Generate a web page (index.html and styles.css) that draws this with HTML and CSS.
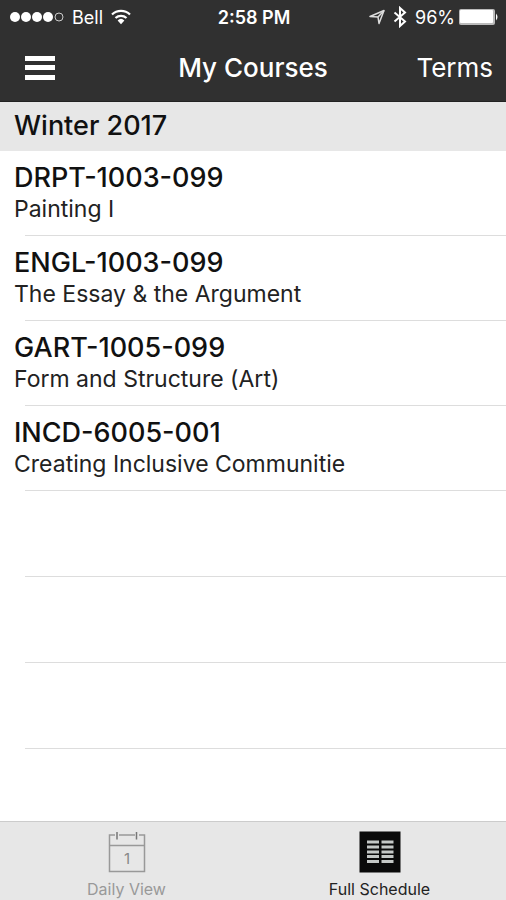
FILE: index.html
```html
<!DOCTYPE html>
<html lang="en">
<head>
    <meta charset="UTF-8">
    <meta name="viewport" content="width=device-width, initial-scale=1.0">
    <title>My Courses</title>
    <link rel="stylesheet" href="styles.css">
</head>
<body>
    <header class="header">
        <div class="status-bar">
            <div class="status-left">
                <svg class="signal" width="54" height="12" viewBox="0 0 54 12">
                    <circle cx="5" cy="6" r="5" fill="#fff"/>
                    <circle cx="16" cy="6" r="5" fill="#fff"/>
                    <circle cx="27" cy="6" r="5" fill="#fff"/>
                    <circle cx="38" cy="6" r="5" fill="#fff"/>
                    <circle cx="49" cy="6" r="4" fill="none" stroke="#ccc"/>
                </svg>
                <span>Bell</span>
                <svg width="20" height="16" viewBox="0 0 20 16" fill="none" stroke="#fff" stroke-width="2.2">
                    <path d="M1 5.5a13 13 0 0 1 18 0"/>
                    <path d="M4.5 9a8 8 0 0 1 11 0"/>
                    <path d="M10 15.2L6.6 11.4a5 5 0 0 1 6.8 0z" fill="#fff" stroke="none"/>
                </svg>
            </div>
            <div class="status-time">2:58 PM</div>
            <div class="status-right">
                <svg class="location" width="16" height="16" viewBox="0 0 16 16" fill="none" stroke="#ddd" stroke-width="1.5" stroke-linejoin="round">
                    <path d="M1 7.5L15 1.500L10 14.500L9 8z"/>
                    <path d="M9 8L15 1.500"/>
                </svg>
                <svg class="bluetooth" width="14" height="22" viewBox="0 0 14 22" fill="none" stroke="#fff" stroke-width="2">
                    <path d="M1.500 6.500L12 15.500L7 20V2L12 6.500L1.500 15.500"/>
                </svg>
                <span>96%</span>
                <svg class="battery" width="39" height="16" viewBox="0 0 39 16" fill="#fff">
                    <rect x="0" y="0" width="36" height="16" rx="2" fill="#bbb"/>
                    <rect x="1" y="1" width="33" height="13" rx="1"/>
                    <path d="M37 4.500q3 3.500 0 7z"/>
                </svg>
            </div>
        </div>
        <div class="nav-bar">
            <button class="menu-button" aria-label="Menu">
                <svg width="30" height="26" viewBox="0 0 30 26" fill="#fff">
                    <rect x="0" y="1" width="30" height="5"/>
                    <rect x="0" y="10" width="30" height="5"/>
                    <rect x="0" y="20" width="30" height="5"/>
                </svg>
            </button>
            <h1>My Courses</h1>
            <button class="terms-button">Terms</button>
        </div>
    </header>
    <main class="content">
        <h2 class="term">Winter 2017</h2>
        <ul class="courses">
            <li class="course">
                <h3>DRPT-1003-099</h3>
                <p>Painting I</p>
            </li>
            <li class="course">
                <h3>ENGL-1003-099</h3>
                <p>The Essay &amp; the Argument</p>
            </li>
            <li class="course">
                <h3>GART-1005-099</h3>
                <p>Form and Structure (Art)</p>
            </li>
            <li class="course">
                <h3>INCD-6005-001</h3>
                <p>Creating Inclusive Communitie</p>
            </li>
        </ul>
        <div class="empty-row"></div>
        <div class="empty-row"></div>
        <div class="empty-row"></div>
    </main>
    <nav class="tab-bar">
        <button class="tab">
            <svg width="42" height="42" viewBox="0 0 42 42" fill="none" stroke="#999" stroke-width="1.5">
                <path d="M9 4H3.500V40.500H38.500V4H33M13 4H29M3.500 14.500H38.500"/>
                <path d="M11 1V8.500M30.500 1V8.500" stroke="#777"/>
                <text class="day" x="21" y="33" text-anchor="middle">1</text>
            </svg>
            <span>Daily View</span>
        </button>
        <button class="tab active">
            <svg width="42" height="42" viewBox="0 0 42 42">
                <rect x="0.500" y="0.500" width="41" height="41" fill="#0a0a0a"/>
                <path d="M8 11H20M22.500 11H34.500M8 16H20M22.500 16H34.500M8 21H20M22.500 21H34.500M8 25.500H20M22.500 25.500H34.500M8 30.500H20M22.500 30.500H34.500" stroke="#c4c8c6" stroke-width="3"/>
            </svg>
            <span>Full Schedule</span>
        </button>
    </nav>
</body>
</html>
```

FILE: styles.css
```css
* {
    box-sizing: border-box;
}
body {
    margin: 0;
    min-height: 100vh;
    display: flex;
    flex-direction: column;
    font-family: Inter, "Liberation Sans", sans-serif;
    color: #111;
    background: #fff;
}
h1, h2, h3, p, ul {
    margin: 0;
    padding: 0;
}
svg {
    display: block;
    flex-shrink: 0;
}
button {
    padding: 0;
    border: none;
    background: none;
    font-family: inherit;
    color: inherit;
    cursor: pointer;
}
.header {
    background: #303030;
    color: #fff;
    border-bottom: 1px solid #222;
}
.status-bar,
.nav-bar {
    display: grid;
    grid-template-columns: 1fr auto 1fr;
    align-items: center;
}
.status-bar {
    height: 34px;
    padding: 0 8px 0 10px;
    font-size: 18px;
}
.status-left,
.status-right {
    display: flex;
    align-items: center;
    gap: 8px;
}
.status-right {
    justify-content: flex-end;
}
.status-right .battery {
    margin-left: -4px;
}
.status-time {
    font-weight: 600;
}
.nav-bar {
    height: 67px;
    padding: 0 13px;
}
.nav-bar h1 {
    font-size: 26px;
    font-weight: 500;
}
.menu-button {
    justify-self: start;
    margin-left: 12px;
}
.terms-button {
    justify-self: end;
    font-size: 26px;
}
.content {
    flex: 1;
}
.term {
    height: 49px;
    padding: 0 14px;
    line-height: 48px;
    font-size: 26px;
    font-weight: 500;
    background: #e7e7e7;
}
.courses {
    list-style: none;
}
.course {
    position: relative;
    height: 85px;
    padding: 11px 14px 0;
}
.course::after {
    content: "";
    position: absolute;
    left: 25px;
    right: 0;
    bottom: 0;
    border-bottom: 1px solid #ddd;
}
.term,
.course h3 {
    font-size: 27px;
    font-weight: 500;
}
.course h3 {
    line-height: 32px;
}
.course p {
    font-size: 23px;
    line-height: 30px;
    color: #222;
}
.empty-row {
    height: 86px;
    margin-left: 25px;
    border-bottom: 1px solid #ddd;
}
.tab-bar {
    display: flex;
    height: 79px;
    background: #e7e7e7;
    border-top: 1px solid #ccc;
}
.tab {
    flex: 1;
    display: flex;
    flex-direction: column;
    align-items: center;
    padding-top: 9px;
    gap: 6px;
    font-size: 16px;
    line-height: 20px;
    color: #999;
}
.tab.active {
    color: #222;
}
.day {
    font-size: 15px;
    fill: #888;
    stroke: none;
}
```
